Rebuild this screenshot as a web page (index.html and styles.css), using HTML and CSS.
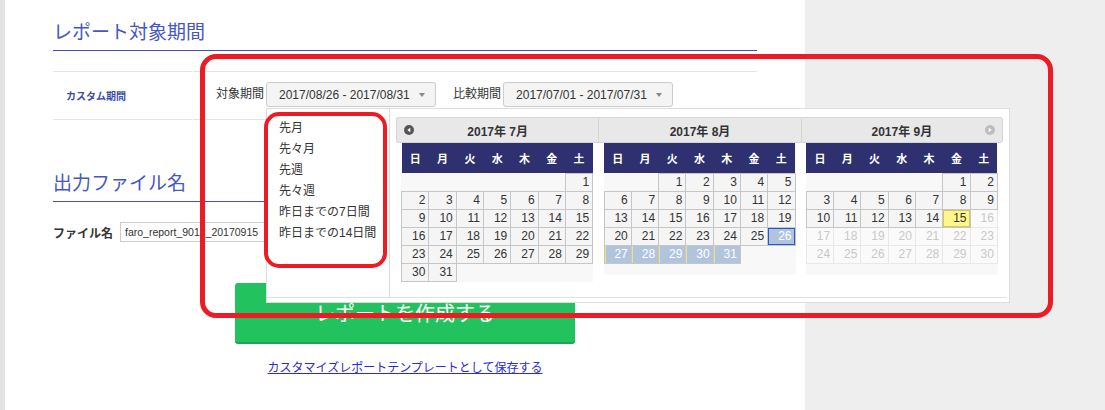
FILE: index.html
```html
<!DOCTYPE html>
<html lang="ja">

<head>
    <meta charset="UTF-8">
    <meta name="viewport" content="width=device-width, initial-scale=1.0">
    <title>レポート作成</title>
    <link rel="stylesheet" href="styles.css">
</head>

<body>
    <div class="page">
        <div class="side-strip"></div>

        <main class="content">
            <h2 class="section-title">レポート対象期間</h2>

            <div class="period-row">
                <div class="period-label">カスタム期間</div>
                <div class="period-fields">
                    <span class="field-label">対象期間</span>
                    <div class="range-picker">
                        <button class="range-btn">2017/08/26 - 2017/08/31<span class="caret"></span></button>

                        <div class="range-panel">
                            <div class="panel-inner">
                                <ul class="preset-list">
                                    <li>先月</li>
                                    <li>先々月</li>
                                    <li>先週</li>
                                    <li>先々週</li>
                                    <li>昨日までの7日間</li>
                                    <li>昨日までの14日間</li>
                                </ul>
                                <div class="calendars" id="calendars"></div>
                            </div>
                        </div>
                    </div>
                    <span class="field-label compare">比較期間</span>
                    <button class="range-btn">2017/07/01 - 2017/07/31<span class="caret"></span></button>
                </div>
            </div>

            <h2 class="section-title second">出力ファイル名</h2>

            <div class="file-row">
                <label>ファイル名</label>
                <input type="text" value="faro_report_9012_20170915">
            </div>

            <button class="create-btn">レポートを作成する</button>
            <div class="save-wrap">
                <a href="#" class="save-link">カスタマイズレポートテンプレートとして保存する</a>
            </div>
        </main>

        <div class="gray-side"></div>

        <div class="mark mark-large"></div>
        <div class="mark mark-small"></div>
    </div>

    <script>
        const months = [
            { num: 7, title: '2017年 7月', offset: 6, days: 31, nav: 'prev' },
            { num: 8, title: '2017年 8月', offset: 2, days: 31 },
            { num: 9, title: '2017年 9月', offset: 5, days: 30, nav: 'next' }
        ];
        const weekdays = ['日', '月', '火', '水', '木', '金', '土'];

        const prevIcon = '<svg width="10" height="10" viewBox="0 0 10 10"><circle cx="5" cy="5" r="5" fill="#555"/><path d="M6.3 2.7 L3.3 5 L6.3 7.3 Z" fill="#fff"/></svg>';
        const nextIcon = '<svg width="10" height="10" viewBox="0 0 10 10"><circle cx="5" cy="5" r="5" fill="#bdbdbd"/><path d="M3.7 2.7 L6.7 5 L3.7 7.3 Z" fill="#fff"/></svg>';

        function dayClass(month, day) {
            if (month === 8 && day === 26) return 'day range-start';
            if (month === 8 && day > 26) return 'day in-range';
            if (month === 9 && day === 15) return 'day today';
            if (month === 9 && day > 15) return 'day disabled';
            return 'day';
        }

        let html = '';
        months.forEach(m => {
            let rows = '';
            let cells = [];
            for (let i = 0; i < m.offset; i++) cells.push('<td></td>');
            for (let d = 1; d <= m.days; d++) {
                cells.push(`<td class="${dayClass(m.num, d)}">${d}</td>`);
                if (cells.length === 7) {
                    rows += `<tr>${cells.join('')}</tr>`;
                    cells = [];
                }
            }
            if (cells.length) {
                while (cells.length < 7) cells.push('<td></td>');
                rows += `<tr>${cells.join('')}</tr>`;
            }

            html += `
                <div class="month">
                    <div class="cal-head">
                        <span class="nav">${m.nav === 'prev' ? prevIcon : ''}</span>
                        <span class="cal-title">${m.title}</span>
                        <span class="nav">${m.nav === 'next' ? nextIcon : ''}</span>
                    </div>
                    <div class="cal-grid">
                        <table class="cal-table">
                            <thead><tr>${weekdays.map(w => `<th>${w}</th>`).join('')}</tr></thead>
                            <tbody>${rows}</tbody>
                        </table>
                    </div>
                </div>`;
        });
        document.getElementById('calendars').innerHTML = html;
    </script>
</body>

</html>
```

FILE: styles.css
```css
* {
    box-sizing: border-box;
}

body {
    margin: 0;
    font-family: "Liberation Sans", "Noto Sans CJK JP", sans-serif;
    color: #333;
    background: #eee;
}

.page {
    position: relative;
    display: flex;
    height: 410px;
    overflow: hidden;
}

.side-strip {
    width: 5px;
    background: #e3e3e3;
}

.content {
    width: 800px;
    padding: 0 48px;
    background: #fff;
}

.gray-side {
    flex: 1;
    background: #eee;
}

/* section headings */
.section-title {
    margin: 21px 0 0;
    padding-bottom: 5px;
    line-height: 24px;
    font-size: 19px;
    font-weight: normal;
    color: #4557c2;
    border-bottom: 1px solid #3f51b5;
}

.section-title.second {
    margin-top: 52px;
}

/* period row */
.period-row {
    display: flex;
    height: 49px;
    margin-top: 20px;
}

.period-label {
    display: flex;
    align-items: center;
    width: 139px;
    padding-left: 13px;
    border-top: 1px solid #e2e2ea;
    border-bottom: 1px solid #e2e2ea;
    font-size: 10px;
    font-weight: bold;
    color: #3a4da3;
}

.period-fields {
    display: flex;
    align-items: flex-start;
    flex: 1;
    margin-left: 1px;
    padding: 10px 0 0 23px;
    border-top: 1px solid #e2e2ea;
    border-bottom: 1px solid #e2e2ea;
}

.field-label {
    margin-right: 2px;
    font-size: 12px;
    line-height: 25px;
}

.field-label.compare {
    margin-left: 17px;
}

.range-picker {
    position: relative;
}

.range-btn {
    display: flex;
    align-items: center;
    justify-content: space-between;
    width: 170px;
    height: 25px;
    padding: 0 10px 0 12px;
    background: #f4f4f4;
    border: 1px solid #ccc;
    border-radius: 3px;
    font: 12px "Liberation Sans", sans-serif;
    color: #333;
}

.caret {
    border-left: 3.5px solid transparent;
    border-right: 3.5px solid transparent;
    border-top: 4px solid #888;
}

/* dropdown panel */
.range-panel {
    position: absolute;
    top: calc(100% + 1px);
    left: 0;
    z-index: 5;
    width: 744px;
    padding: 0 3px 4px 0;
    background: #fff;
    border: 1px solid #ddd;
}

.panel-inner {
    display: flex;
    border-bottom: 1px solid #e0e0e0;
}

.preset-list {
    width: 123px;
    margin: 0;
    padding: 9px 0 0 12px;
    list-style: none;
    border-right: 1px solid #ddd;
    font-size: 12px;
    line-height: 21px;
    color: #333;
}

.calendars {
    display: flex;
    width: 616px;
    padding: 8px 3px 15px 6px;
}

.month {
    flex: 1;
}

.cal-head {
    display: grid;
    grid-template-columns: 24px 1fr 24px;
    align-items: center;
    height: 26px;
    background: #e8e8e8;
    border: 1px solid #d5d5d5;
    border-right: none;
}

.month:first-child .cal-head {
    border-radius: 3px 0 0 3px;
}

.month:last-child .cal-head {
    border-right: 1px solid #d5d5d5;
    border-radius: 0 3px 3px 0;
}

.nav {
    display: flex;
    justify-content: center;
}

.cal-title {
    text-align: center;
    font-size: 12px;
    font-weight: bold;
    color: #333;
}

.cal-grid {
    width: 192px;
    min-height: 132px;
    margin: 0 auto;
    background: #f8f8f8;
}

.cal-table {
    width: 192px;
    border-collapse: collapse;
    table-layout: fixed;
}

.cal-table th {
    height: 30px;
    padding: 0;
    background: #2e3070;
    color: #fff;
    font-size: 11px;
    font-weight: bold;
}

.cal-table tbody tr {
    height: 18px;
}

.cal-table td {
    padding: 0 3px 0 0;
    text-align: right;
    font-size: 12px;
    line-height: 16px;
    color: #333;
}

.cal-table td.day {
    background: #f5f5f5;
    border: 1px solid #c6c6c6;
}

.cal-table td.range-start {
    background: #b0c4de;
    color: #fff;
    box-shadow: inset 0 0 0 1px #2457d8;
}

.cal-table td.in-range {
    background: #b0c4de;
    color: #fff;
    box-shadow: inset 1px 0 0 #f3e27a;
}

.cal-table td.today {
    background: #fdf78b;
    box-shadow: inset 0 0 0 1px #d6c75a;
}

.cal-table td.disabled {
    background: #fafafa;
    border-color: #e8e8e8;
    color: #c8c8c8;
}

/* file name */
.file-row {
    display: flex;
    align-items: center;
    height: 20px;
    margin-top: 20px;
}

.file-row label {
    margin-right: 7px;
    font-size: 12px;
    font-weight: bold;
    color: #333;
}

.file-row input {
    width: 250px;
    height: 20px;
    padding: 0 4px;
    border: 1px solid #ccc;
    font: 10.5px "Liberation Sans", sans-serif;
    color: #333;
}

/* actions */
.create-btn {
    display: block;
    width: 340px;
    height: 61px;
    margin: 41px 0 0 182px;
    background: #22c35e;
    border: none;
    border-bottom: 2px solid #1ea552;
    border-radius: 3px;
    font: 20px "Noto Sans CJK JP", sans-serif;
    color: #fff;
}

.save-wrap {
    width: 340px;
    margin: 15px 0 0 182px;
    text-align: center;
    line-height: 16px;
}

.save-link {
    font-size: 12px;
    color: #2a2ad8;
}

/* red annotation frames */
.mark {
    position: absolute;
    z-index: 10;
    border: 5px solid #ed1c24;
    border-radius: 16px;
    pointer-events: none;
}

.mark-large {
    left: 200px;
    top: 54px;
    width: 853px;
    height: 264px;
}

.mark-small {
    left: 264px;
    top: 112px;
    width: 123px;
    height: 156px;
    border-width: 4px;
    border-radius: 15px;
}
```
